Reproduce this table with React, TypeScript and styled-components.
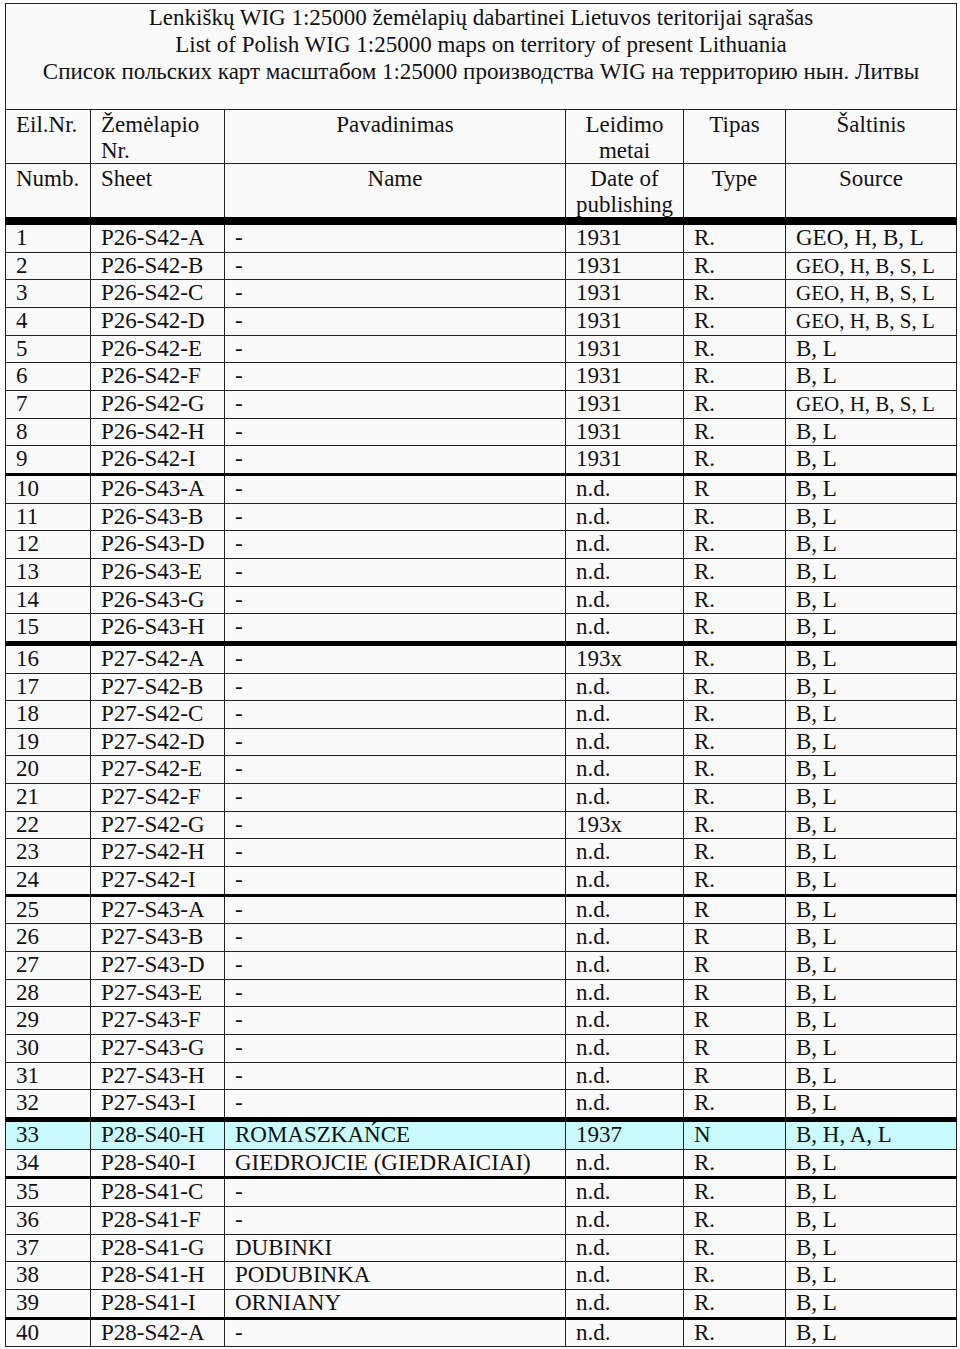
import React from "react";
import styled, { createGlobalStyle } from "styled-components";

const GlobalStyle = createGlobalStyle`
  html, body { margin: 0; padding: 0; background: #ffffff; }
  body { font-family: "Liberation Serif", "Times New Roman", serif; color: #111; }
`;

const Table = styled.table`
  margin: 3px 0 0 5px;
  width: 951px;
  border-collapse: collapse;
  table-layout: fixed;
  font-size: 23px;
  background: #fafafa;
`;

const Col = styled.col<{ $w: number }>`
  width: ${(p) => p.$w}px;
`;

const TitleCell = styled.td`
  border: 1px solid #222;
  text-align: center;
  vertical-align: top;
  line-height: 27px;
  padding: 0 0 24px;
  background: #fafafa;
`;

const HeadCell = styled.td<{ $center?: boolean; $last?: boolean }>`
  border: 1px solid #222;
  border-bottom: ${(p) => (p.$last ? "8px solid #000" : "1px solid #222")};
  vertical-align: top;
  text-align: ${(p) => (p.$center ? "center" : "left")};
  line-height: 25.5px;
  padding: 2px 10px 0;
`;

type Sep = "none" | "medium" | "thick";

const Row = styled.tr<{ $hl?: boolean }>`
  background: ${(p) => (p.$hl ? "#c9fafd" : "transparent")};
`;

const Cell = styled.td<{ $sep: Sep; $small?: boolean }>`
  border: 1px solid #222;
  border-top: ${(p) =>
    p.$sep === "thick" ? "5px solid #000" : p.$sep === "medium" ? "3px solid #000" : "1px solid #222"};
  padding: 0 10px;
  line-height: 26.65px;
  white-space: nowrap;
  overflow: hidden;
  font-size: ${(p) => (p.$small ? "21px" : "23px")};
  vertical-align: middle;
`;

type Item = {
  n: number;
  sheet: string;
  name: string;
  date: string;
  type: string;
  src: string;
  sep?: Sep;
  hl?: boolean;
};

const GEO = "GEO, H, B, S, L";

const rows: Item[] = [
  { n: 1, sheet: "P26-S42-A", name: "-", date: "1931", type: "R.", src: "GEO, H, B, L" },
  { n: 2, sheet: "P26-S42-B", name: "-", date: "1931", type: "R.", src: GEO },
  { n: 3, sheet: "P26-S42-C", name: "-", date: "1931", type: "R.", src: GEO },
  { n: 4, sheet: "P26-S42-D", name: "-", date: "1931", type: "R.", src: GEO },
  { n: 5, sheet: "P26-S42-E", name: "-", date: "1931", type: "R.", src: "B, L" },
  { n: 6, sheet: "P26-S42-F", name: "-", date: "1931", type: "R.", src: "B, L" },
  { n: 7, sheet: "P26-S42-G", name: "-", date: "1931", type: "R.", src: GEO },
  { n: 8, sheet: "P26-S42-H", name: "-", date: "1931", type: "R.", src: "B, L" },
  { n: 9, sheet: "P26-S42-I", name: "-", date: "1931", type: "R.", src: "B, L" },
  { n: 10, sheet: "P26-S43-A", name: "-", date: "n.d.", type: "R", src: "B, L", sep: "medium" },
  { n: 11, sheet: "P26-S43-B", name: "-", date: "n.d.", type: "R.", src: "B, L" },
  { n: 12, sheet: "P26-S43-D", name: "-", date: "n.d.", type: "R.", src: "B, L" },
  { n: 13, sheet: "P26-S43-E", name: "-", date: "n.d.", type: "R.", src: "B, L" },
  { n: 14, sheet: "P26-S43-G", name: "-", date: "n.d.", type: "R.", src: "B, L" },
  { n: 15, sheet: "P26-S43-H", name: "-", date: "n.d.", type: "R.", src: "B, L" },
  { n: 16, sheet: "P27-S42-A", name: "-", date: "193x", type: "R.", src: "B, L", sep: "thick" },
  { n: 17, sheet: "P27-S42-B", name: "-", date: "n.d.", type: "R.", src: "B, L" },
  { n: 18, sheet: "P27-S42-C", name: "-", date: "n.d.", type: "R.", src: "B, L" },
  { n: 19, sheet: "P27-S42-D", name: "-", date: "n.d.", type: "R.", src: "B, L" },
  { n: 20, sheet: "P27-S42-E", name: "-", date: "n.d.", type: "R.", src: "B, L" },
  { n: 21, sheet: "P27-S42-F", name: "-", date: "n.d.", type: "R.", src: "B, L" },
  { n: 22, sheet: "P27-S42-G", name: "-", date: "193x", type: "R.", src: "B, L" },
  { n: 23, sheet: "P27-S42-H", name: "-", date: "n.d.", type: "R.", src: "B, L" },
  { n: 24, sheet: "P27-S42-I", name: "-", date: "n.d.", type: "R.", src: "B, L" },
  { n: 25, sheet: "P27-S43-A", name: "-", date: "n.d.", type: "R", src: "B, L", sep: "medium" },
  { n: 26, sheet: "P27-S43-B", name: "-", date: "n.d.", type: "R", src: "B, L" },
  { n: 27, sheet: "P27-S43-D", name: "-", date: "n.d.", type: "R", src: "B, L" },
  { n: 28, sheet: "P27-S43-E", name: "-", date: "n.d.", type: "R", src: "B, L" },
  { n: 29, sheet: "P27-S43-F", name: "-", date: "n.d.", type: "R", src: "B, L" },
  { n: 30, sheet: "P27-S43-G", name: "-", date: "n.d.", type: "R", src: "B, L" },
  { n: 31, sheet: "P27-S43-H", name: "-", date: "n.d.", type: "R", src: "B, L" },
  { n: 32, sheet: "P27-S43-I", name: "-", date: "n.d.", type: "R.", src: "B, L" },
  { n: 33, sheet: "P28-S40-H", name: "ROMASZKAŃCE", date: "1937", type: "N", src: "B, H, A, L", sep: "thick", hl: true },
  { n: 34, sheet: "P28-S40-I", name: "GIEDROJCIE (GIEDRAICIAI)", date: "n.d.", type: "R.", src: "B, L" },
  { n: 35, sheet: "P28-S41-C", name: "-", date: "n.d.", type: "R.", src: "B, L", sep: "medium" },
  { n: 36, sheet: "P28-S41-F", name: "-", date: "n.d.", type: "R.", src: "B, L" },
  { n: 37, sheet: "P28-S41-G", name: "DUBINKI", date: "n.d.", type: "R.", src: "B, L" },
  { n: 38, sheet: "P28-S41-H", name: "PODUBINKA", date: "n.d.", type: "R.", src: "B, L" },
  { n: 39, sheet: "P28-S41-I", name: "ORNIANY", date: "n.d.", type: "R.", src: "B, L" },
  { n: 40, sheet: "P28-S42-A", name: "-", date: "n.d.", type: "R.", src: "B, L", sep: "medium" },
];

const widths = [85, 134, 341, 118, 102, 171];

export default function App() {
  return (
    <>
      <GlobalStyle />
      <Table>
        <colgroup>
          {widths.map((w, i) => (
            <Col key={i} $w={w} />
          ))}
        </colgroup>
        <thead>
          <tr>
            <TitleCell colSpan={6}>
              Lenkiškų WIG 1:25000 žemėlapių dabartinei Lietuvos teritorijai sąrašas
              <br />
              List of Polish WIG 1:25000 maps on territory of present Lithuania
              <br />
              Список польских карт масштабом 1:25000 производства WIG на территорию нын. Литвы
            </TitleCell>
          </tr>
          <tr>
            <HeadCell>Eil.Nr.</HeadCell>
            <HeadCell>
              Žemėlapio
              <br />
              Nr.
            </HeadCell>
            <HeadCell $center>Pavadinimas</HeadCell>
            <HeadCell $center>
              Leidimo
              <br />
              metai
            </HeadCell>
            <HeadCell $center>Tipas</HeadCell>
            <HeadCell $center>Šaltinis</HeadCell>
          </tr>
          <tr>
            <HeadCell $last>Numb.</HeadCell>
            <HeadCell $last>Sheet</HeadCell>
            <HeadCell $last $center>
              Name
            </HeadCell>
            <HeadCell $last $center>
              Date of
              <br />
              publishing
            </HeadCell>
            <HeadCell $last $center>
              Type
            </HeadCell>
            <HeadCell $last $center>
              Source
            </HeadCell>
          </tr>
        </thead>
        <tbody>
          {rows.map((r) => {
            const sep: Sep = r.sep ?? "none";
            return (
              <Row key={r.n} $hl={r.hl}>
                <Cell $sep={sep}>{r.n}</Cell>
                <Cell $sep={sep}>{r.sheet}</Cell>
                <Cell $sep={sep}>{r.name}</Cell>
                <Cell $sep={sep}>{r.date}</Cell>
                <Cell $sep={sep}>{r.type}</Cell>
                <Cell $sep={sep} $small={r.src === GEO}>
                  {r.src}
                </Cell>
              </Row>
            );
          })}
        </tbody>
      </Table>
    </>
  );
}
